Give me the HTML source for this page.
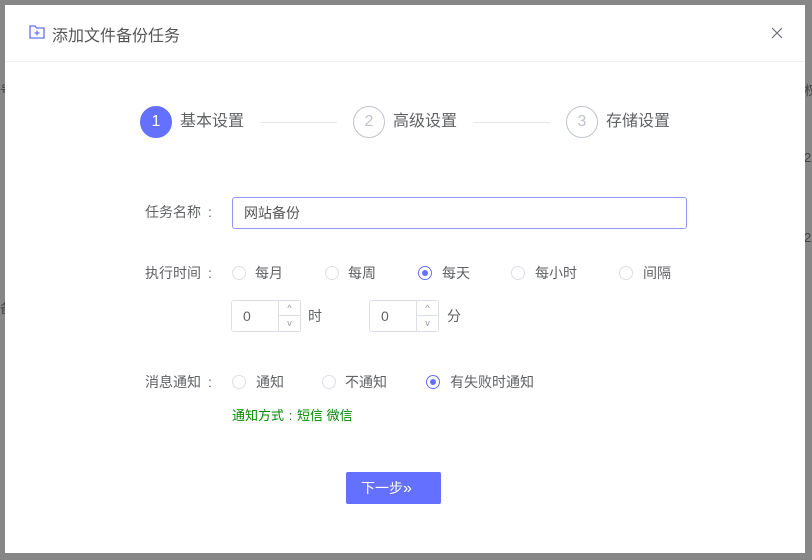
<!DOCTYPE html>
<html><head><meta charset="utf-8"><style>
*{margin:0;padding:0;box-sizing:border-box}
body{width:812px;height:560px;background:#878787;position:relative;overflow:hidden;font-family:"Liberation Sans","Noto Sans CJK SC",sans-serif;font-size:14px;color:#606266}
.a{position:absolute}
#dlg{left:5px;top:5px;width:800px;height:548px;background:#fff}
.hd{left:0;top:0;width:800px;height:57px;border-bottom:1px solid #ebeef5}
.circ{width:32px;height:32px;border-radius:50%;border:1px solid #c0c4cc;color:#c0c4cc;font-size:16px;text-align:center;line-height:30px}
.step{font-size:16px;color:#606266;line-height:32px}
.line{height:1px;background:#e4e7ed}
.lbl{font-size:14px;line-height:14px;color:#606266}
.lbl b{font-weight:normal;display:inline-block;width:14px;text-align:center;margin-left:2px}
.radio{width:14px;height:14px;border-radius:50%;border:1px solid #dcdfe6;background:#fff}
.radio.on{border-color:#6470ff}
.radio.on::after{content:"";position:absolute;left:3px;top:3px;width:6px;height:6px;border-radius:50%;background:#6470ff}
.rt{font-size:14px;line-height:14px;color:#606266}
.num{width:70px;height:32px;border:1px solid #dcdfe6;border-radius:3px}
.num .sp{position:absolute;right:0;top:0;width:22px;height:30px;border-left:1px solid #dcdfe6;background:#fff}
.num .sp div{height:15px;font-size:9px;color:#909399;text-align:center;line-height:15px}
</style></head><body>
<div class="a" style="left:0;top:80px;font-size:13px;color:#444">号</div>
<div class="a" style="left:804px;top:80px;font-size:13px;color:#444">权</div>
<div class="a" style="left:804px;top:150px;font-size:13px;color:#444">2</div>
<div class="a" style="left:804px;top:230px;font-size:13px;color:#444">2</div>
<div class="a" style="left:0;top:298px;font-size:13px;color:#444">备</div>
<div id="dlg" class="a">
 <div class="a hd">
  <svg class="a" style="left:24px;top:20px" width="16" height="14" viewBox="0 0 16 14"><path d="M1 1h5l1.5 2H15v10H1z" fill="none" stroke="#6470ff" stroke-width="1.3"/><path d="M8 5.5v5M5.5 8h5" stroke="#6470ff" stroke-width="1.2"/></svg>
  <div class="a" style="left:47px;top:17px;font-size:16px;color:#555">添加文件备份任务</div>
  <svg class="a" style="left:766px;top:22px" width="12" height="12" viewBox="0 0 12 12"><path d="M1 1L11 11M11 1L1 11" stroke="#6a6f80" stroke-width="1.2"/></svg>
 </div>
 <div class="a circ" style="left:135px;top:101px;background:#6470ff;border-color:#6470ff;color:#fff">1</div>
 <div class="a step" style="left:175px;top:101px">基本设置</div>
 <div class="a line" style="left:255px;top:117px;width:77px"></div>
 <div class="a circ" style="left:348px;top:101px">2</div>
 <div class="a step" style="left:388px;top:101px">高级设置</div>
 <div class="a line" style="left:468px;top:117px;width:77px"></div>
 <div class="a circ" style="left:561px;top:101px">3</div>
 <div class="a step" style="left:601px;top:101px">存储设置</div>

 <div class="a lbl" style="left:140px;top:200px">任务名称<b>:</b></div>
 <div class="a" style="left:227px;top:192px;width:455px;height:32px;border:1px solid #8f98ff;border-radius:3px;padding-left:11px;line-height:30px;font-size:14px;color:#555">网站备份</div>

 <div class="a lbl" style="left:140px;top:261px">执行时间<b>:</b></div>
 <div class="a radio" style="left:227px;top:261px"></div><div class="a rt" style="left:250px;top:261px">每月</div>
 <div class="a radio" style="left:320px;top:261px"></div><div class="a rt" style="left:343px;top:261px">每周</div>
 <div class="a radio on" style="left:413px;top:261px"></div><div class="a rt" style="left:437px;top:261px">每天</div>
 <div class="a radio" style="left:506px;top:261px"></div><div class="a rt" style="left:530px;top:261px">每小时</div>
 <div class="a radio" style="left:614px;top:261px"></div><div class="a rt" style="left:638px;top:261px">间隔</div>

 <div class="a num" style="left:226px;top:295px"><div class="a" style="left:11px;top:7px;font-size:14px">0</div><div class="sp"><div style="border-bottom:1px solid #dcdfe6">^</div><div>v</div></div></div>
 <div class="a rt" style="left:303px;top:304px">时</div>
 <div class="a num" style="left:364px;top:295px"><div class="a" style="left:11px;top:7px;font-size:14px">0</div><div class="sp"><div style="border-bottom:1px solid #dcdfe6">^</div><div>v</div></div></div>
 <div class="a rt" style="left:442px;top:304px">分</div>

 <div class="a lbl" style="left:140px;top:370px">消息通知<b>:</b></div>
 <div class="a radio" style="left:227px;top:370px"></div><div class="a rt" style="left:251px;top:370px">通知</div>
 <div class="a radio" style="left:317px;top:370px"></div><div class="a rt" style="left:340px;top:370px">不通知</div>
 <div class="a radio on" style="left:421px;top:370px"></div><div class="a rt" style="left:445px;top:370px">有失败时通知</div>
 <div class="a" style="left:227px;top:404px;font-size:13px;line-height:14px;color:#008a00">通知方式<span style="display:inline-block;width:13px;text-align:center">:</span>短信 微信</div>

 <div class="a" style="left:341px;top:467px;width:95px;height:32px;background:#6470ff;border-radius:2px;color:#fff;font-size:14px;line-height:32px;padding-left:15px">下一步<span style="font-size:16px">»</span></div>
</div>
</body></html>
